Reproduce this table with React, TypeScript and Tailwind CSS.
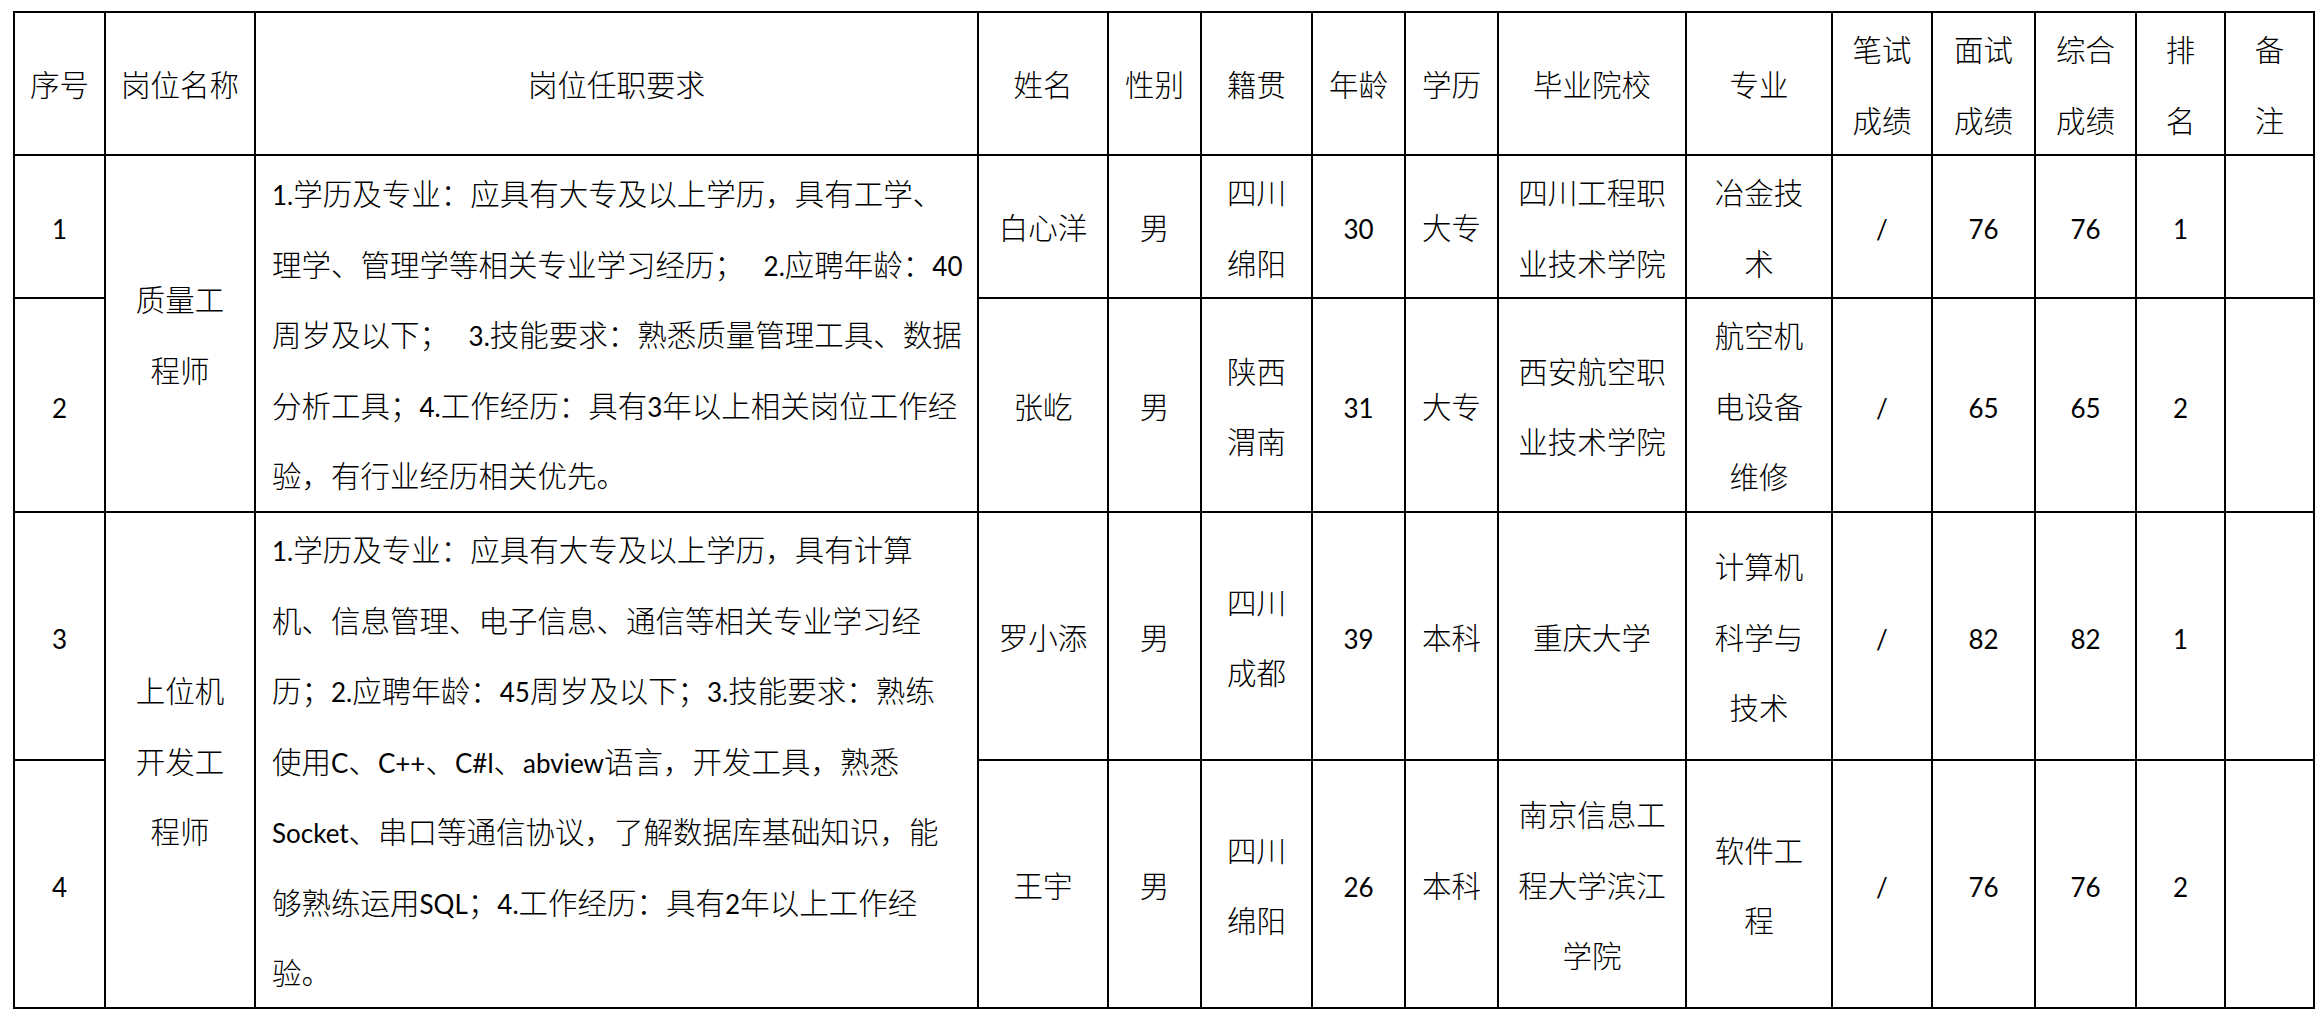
import type { ReactNode } from "react";

type Row = {
  no: string;
  name: string[];
  sex: string;
  origin: string[];
  age: string;
  edu: string;
  school: string[];
  major: string[];
  written: string;
  interview: string;
  total: string;
  rank: string;
};

const rows: Row[] = [
  { no: "1", name: ["白心洋"], sex: "男", origin: ["四川", "绵阳"], age: "30", edu: "大专", school: ["四川工程职", "业技术学院"], major: ["冶金技", "术"], written: "/", interview: "76", total: "76", rank: "1" },
  { no: "2", name: ["张屹"], sex: "男", origin: ["陕西", "渭南"], age: "31", edu: "大专", school: ["西安航空职", "业技术学院"], major: ["航空机", "电设备", "维修"], written: "/", interview: "65", total: "65", rank: "2" },
  { no: "3", name: ["罗小添"], sex: "男", origin: ["四川", "成都"], age: "39", edu: "本科", school: ["重庆大学"], major: ["计算机", "科学与", "技术"], written: "/", interview: "82", total: "82", rank: "1" },
  { no: "4", name: ["王宇"], sex: "男", origin: ["四川", "绵阳"], age: "26", edu: "本科", school: ["南京信息工", "程大学滨江", "学院"], major: ["软件工", "程"], written: "/", interview: "76", total: "76", rank: "2" },
];

const jobs = [
  {
    title: ["质量工", "程师"],
    req: [
      "1.学历及专业：应具有大专及以上学历，具有工学、",
      "理学、管理学等相关专业学习经历；\u00a0\u00a0\u00a02.应聘年龄：40",
      "周岁及以下；\u00a0\u00a0\u00a03.技能要求：熟悉质量管理工具、数据",
      "分析工具；4.工作经历：具有3年以上相关岗位工作经",
      "验，有行业经历相关优先。",
    ],
  },
  {
    title: ["上位机", "开发工", "程师"],
    req: [
      "1.学历及专业：应具有大专及以上学历，具有计算",
      "机、信息管理、电子信息、通信等相关专业学习经",
      "历；2.应聘年龄：45周岁及以下；3.技能要求：熟练",
      "使用C、C++、C#l、abview语言，开发工具，熟悉",
      "Socket、串口等通信协议，了解数据库基础知识，能",
      "够熟练运用SQL；4.工作经历：具有2年以上工作经",
      "验。",
    ],
  },
];

const widths = [91, 150, 723, 130, 93, 111, 93, 93, 188, 146, 100, 103, 101, 89, 89];
const rowHeights = ["h-[143px]", "h-[214px]", "h-[248px]", "h-[248px]"];

// latin runs are set in a smaller humanist face, like the Calibri of the source
function Txt({ s }: { s: string }) {
  const parts = s.split(/([A-Za-z0-9.#+/]+)/);
  return (
    <>
      {parts.map((p, i) =>
        i % 2 ? (
          <span key={i} className="font-['Lato',sans-serif] text-[26px] font-normal leading-none">
            {p}
          </span>
        ) : (
          p
        )
      )}
    </>
  );
}

function Lines({ lines }: { lines: string[] }) {
  return (
    <>
      {lines.map((l) => (
        <div key={l} className="whitespace-nowrap">
          <Txt s={l} />
        </div>
      ))}
    </>
  );
}

function Cell({ children, rowSpan, className = "" }: { children?: ReactNode; rowSpan?: number; className?: string }) {
  return (
    <td rowSpan={rowSpan} className={`border-2 border-black p-0 text-center align-middle ${className}`}>
      {children}
    </td>
  );
}

const headers: string[][] = [
  ["序号"],
  ["岗位名称"],
  ["岗位任职要求"],
  ["姓名"],
  ["性别"],
  ["籍贯"],
  ["年龄"],
  ["学历"],
  ["毕业院校"],
  ["专业"],
  ["笔试", "成绩"],
  ["面试", "成绩"],
  ["综合", "成绩"],
  ["排", "名"],
  ["备", "注"],
];

export default function App() {
  return (
    <div className="min-h-screen w-[2320px] bg-white pl-[13px] pt-[11px] font-['Noto_Sans_CJK_SC',sans-serif] text-[29.5px] font-light leading-[70.5px] text-black">
      <table className="w-[2300px] table-fixed border-collapse">
        <colgroup>
          {widths.map((w, i) => (
            <col key={i} style={{ width: w }} />
          ))}
        </colgroup>
        <thead>
          <tr className="h-[143px]">
            {headers.map((h) => (
              <th key={h.join("")} className="border-2 border-black p-0 text-center align-middle font-light">
                <Lines lines={h} />
              </th>
            ))}
          </tr>
        </thead>
        <tbody>
          {rows.map((r, i) => {
            const job = jobs[Math.floor(i / 2)];
            const first = i % 2 === 0;
            return (
              <tr key={r.no} className={rowHeights[i]}>
                <Cell>
                  <Txt s={r.no} />
                </Cell>
                {first && (
                  <>
                    <Cell rowSpan={2}>
                      <Lines lines={job.title} />
                    </Cell>
                    <Cell rowSpan={2} className="pl-[16px] text-left">
                      <Lines lines={job.req} />
                    </Cell>
                  </>
                )}
                <Cell>
                  <Lines lines={r.name} />
                </Cell>
                <Cell>{r.sex}</Cell>
                <Cell>
                  <Lines lines={r.origin} />
                </Cell>
                <Cell>
                  <Txt s={r.age} />
                </Cell>
                <Cell>{r.edu}</Cell>
                <Cell>
                  <Lines lines={r.school} />
                </Cell>
                <Cell>
                  <Lines lines={r.major} />
                </Cell>
                <Cell>
                  <Txt s={r.written} />
                </Cell>
                <Cell>
                  <Txt s={r.interview} />
                </Cell>
                <Cell>
                  <Txt s={r.total} />
                </Cell>
                <Cell>
                  <Txt s={r.rank} />
                </Cell>
                <Cell />
              </tr>
            );
          })}
        </tbody>
      </table>
    </div>
  );
}
